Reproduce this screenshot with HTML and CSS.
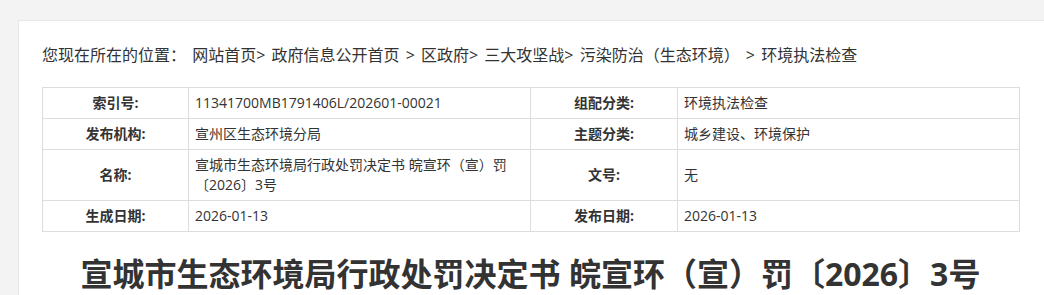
FILE: index.html
```html
<html>
	<head>
		<meta charset="utf-8">
		<title>宣城市生态环境局行政处罚决定书</title>
		<link rel="stylesheet" href="styles.css">
	</head>
	<body>
		<div class="panel">
			<div class="inner">
				<div class="crumb">
					<span class="here">您现在所在的位置：</span>
					<a href="#">网站首页</a>&gt;
					<a href="#">政府信息公开首页</a> &gt;
					<a href="#">区政府</a>&gt;
					<a href="#">三大攻坚战</a>&gt;
					<a href="#">污染防治（生态环境）</a> &gt;
					<a href="#">环境执法检查</a>
				</div>

				<table class="info">
					<colgroup>
						<col class="c1">
						<col class="c2">
						<col class="c3">
						<col class="c4">
					</colgroup>
					<tr>
						<th>索引号:</th>
						<td>11341700MB1791406L/202601-00021</td>
						<th>组配分类:</th>
						<td>环境执法检查</td>
					</tr>
					<tr>
						<th>发布机构:</th>
						<td>宣州区生态环境分局</td>
						<th>主题分类:</th>
						<td>城乡建设、环境保护</td>
					</tr>
					<tr>
						<th>名称:</th>
						<td>宣城市生态环境局行政处罚决定书 皖宣环（宣）罚〔2026〕3号</td>
						<th>文号:</th>
						<td>无</td>
					</tr>
					<tr>
						<th>生成日期:</th>
						<td>2026-01-13</td>
						<th>发布日期:</th>
						<td>2026-01-13</td>
					</tr>
				</table>

				<h1 class="title">宣城市生态环境局行政处罚决定书 皖宣环（宣）罚〔2026〕3号</h1>
			</div>
		</div>
	</body>
</html>
```

FILE: styles.css
```css
body {
	margin: 0;
	background-color: #f3f3f3;
	overflow: hidden;
	font-family: "Open Sans", "Noto Sans CJK SC", sans-serif;
	color: #333;
}

.panel {
	margin-top: 20px;
	margin-left: 18px;
	width: 1060px;
	height: 400px;
	background-color: #fff;
	border-top: 1px solid #e8e8e8;
	border-left: 1px solid #e8e8e8;
	box-sizing: border-box;
	padding: 22px 0 0 23px;
}

.inner {
	width: 977px;
}

.crumb {
	font-size: 16px;
	line-height: 24px;
	color: #333;
	word-spacing: 2px;
}

.crumb a {
	color: #333;
	text-decoration: none;
}

.info {
	margin-top: 20px;
	width: 977px;
	border-collapse: collapse;
	table-layout: fixed;
	font-size: 14px;
	line-height: 20px;
}

.info th, .info td {
	border: 1px solid #ddd;
	padding: 5px 6px;
	vertical-align: middle;
}

.info th {
	text-align: center;
	font-weight: bold;
	color: #333;
}

.info td {
	text-align: left;
	color: #333;
}

.c1 { width: 146px; }
.c2 { width: 342px; }
.c3 { width: 147px; }
.c4 { width: 342px; }

.title {
	margin: 21px 0 0 0;
	text-align: center;
	font-size: 32px;
	line-height: 42px;
	font-weight: bold;
	color: #333;
}
```
